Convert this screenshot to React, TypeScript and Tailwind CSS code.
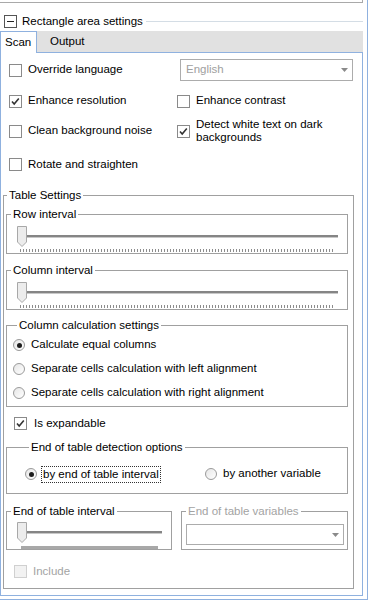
import type { ReactNode } from "react";

function Check({ checked = false, disabled = false }: { checked?: boolean; disabled?: boolean }) {
  return (
    <span
      className={`flex h-[13px] w-[13px] shrink-0 items-center justify-center border ${
        disabled ? "border-[#d0d0d0] bg-[#f2f2f2]" : "border-[#8a8a8a] bg-white"
      }`}
    >
      {checked && (
        <svg width="11" height="11" viewBox="0 0 11 11">
          <polyline points="2,5.5 4.2,8 8.8,2.5" fill="none" stroke="#333" strokeWidth="1.6" />
        </svg>
      )}
    </span>
  );
}

function Radio({ checked = false }: { checked?: boolean }) {
  return (
    <span className="flex h-[12px] w-[12px] shrink-0 items-center justify-center rounded-full border border-[#9a9a9a] bg-[linear-gradient(135deg,#e6e6e6,#ffffff)]">
      {checked && <span className="h-[5px] w-[5px] rounded-full bg-[#1e1e1e]" />}
    </span>
  );
}

function Combo({ text, className }: { text?: string; className: string }) {
  return (
    <div className={`flex items-center justify-between border border-[#acacac] bg-white pl-[5px] pr-[4px] ${className}`}>
      <span className="text-[#a0a0a0]">{text}</span>
      <svg width="7" height="4" viewBox="0 0 7 4">
        <polygon points="0,0 7,0 3.5,4" fill="#8a8a8a" />
      </svg>
    </div>
  );
}

function Group({
  title,
  className,
  muted = false,
  outer = false,
  children,
}: {
  title: string;
  className: string;
  muted?: boolean;
  outer?: boolean;
  children: ReactNode;
}) {
  return (
    <fieldset className={`border border-[#a0a0a0] ${className}`}>
      <legend
        className={`${outer ? "ml-[1px]" : "ml-[4px]"} px-[2px] leading-[15px] ${muted ? "text-[#a3a3a3]" : ""}`}
      >
        {title}
      </legend>
      {children}
    </fieldset>
  );
}

function Thumb({ top }: { top: string }) {
  return (
    <svg width="10" height="21" viewBox="0 0 10 21" className={`absolute left-[10px] ${top}`}>
      <polygon points="0.5,0.5 9.5,0.5 9.5,16 5,20.5 0.5,16" fill="#ececec" stroke="#a8a8a8" />
    </svg>
  );
}

function Slider() {
  return (
    <div className="relative h-[31px]">
      <div className="absolute left-[19px] top-[13px] h-[3px] w-[312px] border-b border-[#c8c8c8] bg-[#858585]" />
      <Thumb top="top-[4px]" />
      <div className="absolute left-[13px] top-[27px] h-[3px] w-[315px] bg-[repeating-linear-gradient(90deg,#8c8c8c_0,#8c8c8c_1px,transparent_1px,transparent_3px)]" />
    </div>
  );
}

export default function App() {
  return (
    <div className="h-[601px] w-[369px] bg-white font-['Liberation_Sans',Arial,sans-serif] text-[11.5px] text-black">
      <div className="h-[600px] w-[368px] border-b border-r border-[#8fb1df]">
        <div className="h-[3px] w-[363px] border-b border-r border-[#a9a9a9]" />

        <div className="mt-[11px] flex h-[14px] w-[363px] items-center">
          <span className="ml-[4px] flex h-[13px] w-[13px] items-center justify-center border border-[#555]">
            <span className="h-px w-[7px] bg-[#222]" />
          </span>
          <span className="ml-[5px] leading-[14px]">Rectangle area settings</span>
          <span className="ml-[3px] h-px flex-1 bg-[#d4dde5]" />
        </div>

        <div className="mt-[3px] flex h-[21px] w-[363px] items-end bg-[#e1e1e1]">
          <div className="relative z-10 -mb-px flex h-[22px] w-[37px] items-center border border-b-0 border-[#8fb1df] bg-white pl-[4px]">
            Scan
          </div>
          <div className="flex h-[21px] items-center pl-[13px]">Output</div>
        </div>

        <div className="h-[544px] w-[363px] border border-[#8fb1df]">
          <div className="pl-[8px]">
            <div className="mt-[6px] flex h-[22px] items-center">
              <div className="flex w-[168px] items-center gap-[6px]">
                <Check />
                <span>Override language</span>
              </div>
              <Combo text="English" className="ml-[3px] h-[22px] w-[173px]" />
            </div>
            <div className="flex h-[40px] items-center">
              <div className="flex w-[168px] items-center gap-[6px]">
                <Check checked />
                <span>Enhance resolution</span>
              </div>
              <div className="flex items-center gap-[6px]">
                <Check />
                <span>Enhance contrast</span>
              </div>
            </div>
            <div className="flex h-[20px] items-center">
              <div className="flex w-[168px] items-center gap-[6px]">
                <Check />
                <span>Clean background noise</span>
              </div>
              <div className="flex items-center gap-[6px]">
                <Check checked />
                <span className="leading-[13px]">
                  Detect white text on dark
                  <br />
                  backgrounds
                </span>
              </div>
            </div>
            <div className="flex h-[47px] items-center gap-[6px]">
              <Check />
              <span>Rotate and straighten</span>
            </div>
          </div>

          <Group title="Table Settings" outer className="ml-[2px] h-[401px] w-[351px] pl-[2px]">
            <Group title="Row interval" className="mt-[4px] w-[342px]">
              <Slider />
            </Group>
            <Group title="Column interval" className="mt-[9px] w-[342px]">
              <Slider />
            </Group>
            <Group title="Column calculation settings" className="mt-[8px] w-[342px] pl-[6px]">
              <div className="flex h-[24px] items-center gap-[6px]">
                <Radio checked />
                <span>Calculate equal columns</span>
              </div>
              <div className="flex h-[23px] items-center gap-[6px]">
                <Radio />
                <span>Separate cells calculation with left alignment</span>
              </div>
              <div className="flex h-[26px] items-center gap-[6px]">
                <Radio />
                <span>Separate cells calculation with right alignment</span>
              </div>
            </Group>
            <div className="flex h-[33px] items-center gap-[7px] pl-[8px]">
              <Check checked />
              <span>Is expandable</span>
            </div>
            <Group title="End of table detection options" className="w-[342px] pl-[18px]">
              <div className="flex h-[38px] items-center">
                <div className="flex w-[180px] items-center gap-[4px]">
                  <Radio checked />
                  <span className="border border-dotted border-[#333] px-[1px] leading-[15px]">
                    by end of table interval
                  </span>
                </div>
                <div className="flex items-center gap-[6px]">
                  <Radio />
                  <span>by another variable</span>
                </div>
              </div>
            </Group>
            <div className="mt-[10px] flex">
              <Group title="End of table interval" className="w-[166px]">
                <div className="relative h-[30px]">
                  <div className="absolute left-[19px] top-[12px] h-[3px] w-[136px] border-b border-[#c8c8c8] bg-[#858585]" />
                  <Thumb top="top-[3px]" />
                  <div className="absolute left-[14px] top-[27px] h-[3px] w-[137px] bg-[#a8a8a8]" />
                </div>
              </Group>
              <Group title="End of table variables" muted className="ml-[9px] w-[167px]">
                <div className="h-[30px] pl-[4px] pt-[5px]">
                  <Combo className="h-[21px] w-[158px]" />
                </div>
              </Group>
            </div>
            <div className="mt-[15px] flex h-[13px] items-center gap-[6px] pl-[8px]">
              <Check disabled />
              <span className="text-[#a3a3a3]">Include</span>
            </div>
          </Group>
        </div>
      </div>
    </div>
  );
}
